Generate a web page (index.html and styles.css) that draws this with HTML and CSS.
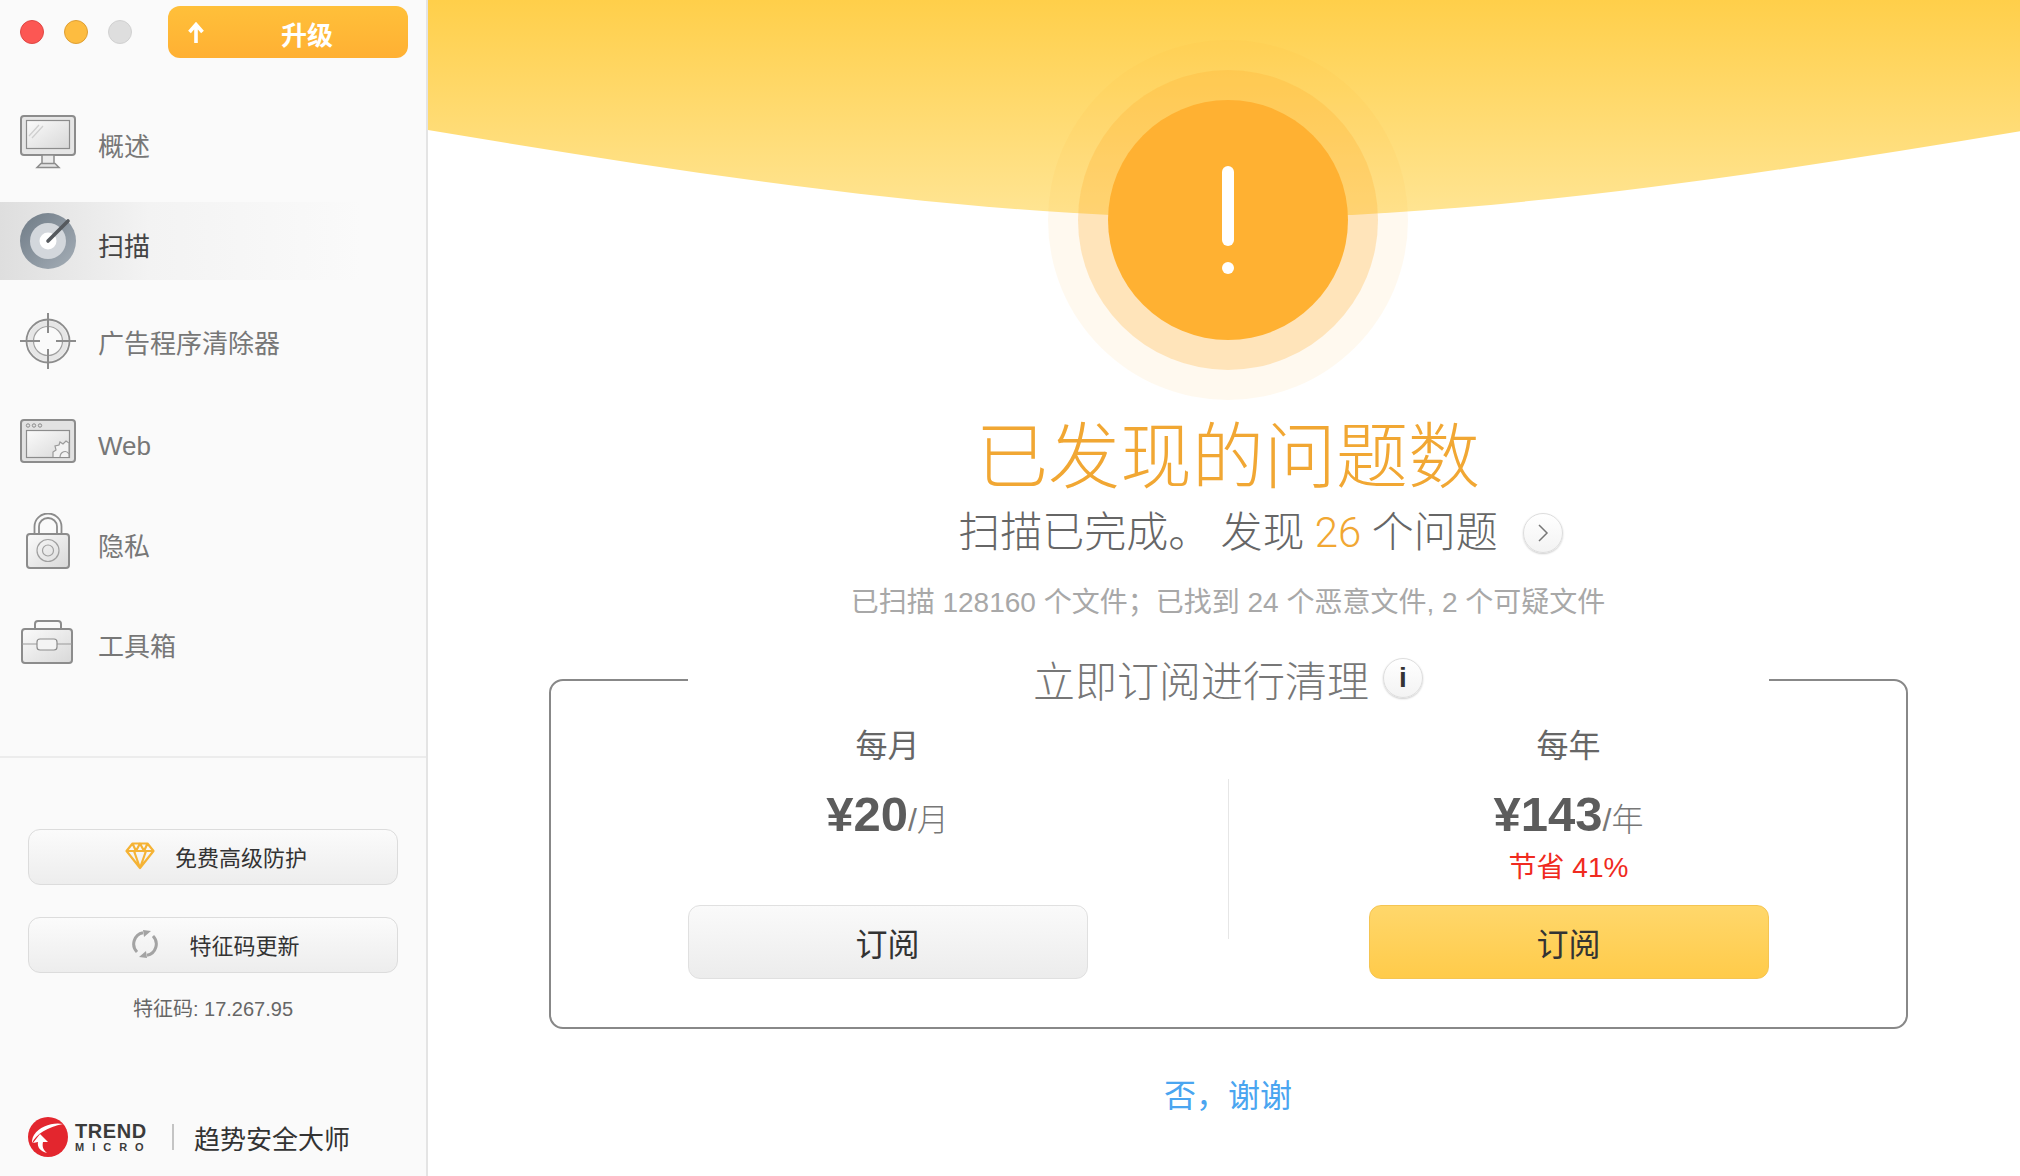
FILE: index.html
```html
<!DOCTYPE html>
<html lang="zh-CN">
<head>
  <meta charset="UTF-8">
  <title>趋势安全大师</title>
  <link rel="stylesheet" href="styles.css">
</head>
<body>
  <div class="app">
    <!-- Sidebar -->
    <aside class="sidebar">
      <div class="titlebar">
        <div class="lights">
          <span class="light light-red"></span>
          <span class="light light-amber"></span>
          <span class="light light-grey"></span>
        </div>
        <button class="upgrade-btn">
          <svg class="upgrade-arrow" width="18" height="22" viewBox="0 0 18 22"><path d="M9 21V4M2.5 10 9 2.5 15.500 10" fill="none" stroke="#fff" stroke-width="3.600"/></svg>
          <span>升级</span>
        </button>
      </div>

      <nav class="nav">
        <a class="nav-item">
          <svg class="nav-icon" width="56" height="56" viewBox="0 0 56 56">
            <defs>
              <linearGradient id="metal" x1="0" y1="0" x2="1" y2="1"><stop offset="0" stop-color="#fbfbfb"/><stop offset="1" stop-color="#d8d8d8"/></linearGradient>
            </defs>
            <rect x="1" y="3" width="54" height="39" rx="3" fill="#e6e6e6" stroke="#8c8c8c" stroke-width="2"/>
            <rect x="6.500" y="7.500" width="43" height="28" fill="url(#metal)" stroke="#8c8c8c" stroke-width="1.200"/>
            <path d="M9 23 19 12M12 25 23 13" stroke="#cfcfcf" stroke-width="1.300"/>
            <path d="M22 42h12v9H22z" fill="#ececec" stroke="#8c8c8c" stroke-width="1.500"/>
            <path d="M17 54.500l4-4h14l4 4z" fill="#e4e4e4" stroke="#8c8c8c" stroke-width="1.500"/>
          </svg>
          <span>概述</span>
        </a>
        <a class="nav-item active">
          <svg class="nav-icon" width="56" height="56" viewBox="0 0 56 56">
            <defs>
              <linearGradient id="dial" x1="0" y1="0" x2="1" y2="1"><stop offset="0" stop-color="#6f7b86"/><stop offset="1" stop-color="#a5aeb7"/></linearGradient>
            </defs>
            <circle cx="28" cy="28" r="28" fill="url(#dial)"/>
            <circle cx="28" cy="28" r="18" fill="#d3d7dc"/>
            <circle cx="28" cy="28" r="8.500" fill="#fff"/>
            <path d="M28 28 48 8" stroke="#55595e" stroke-width="3.600" stroke-linecap="round"/>
          </svg>
          <span>扫描</span>
        </a>
        <a class="nav-item nav-item-tight">
          <svg class="nav-icon" width="56" height="56" viewBox="0 0 56 56">
            <circle cx="28" cy="28" r="17.500" fill="none" stroke="#e6e6e6" stroke-width="5"/>
            <circle cx="28" cy="28" r="21.500" fill="none" stroke="#8c8c8c" stroke-width="1.800"/>
            <circle cx="28" cy="28" r="14.500" fill="none" stroke="#a0a0a0" stroke-width="1.200"/>
            <path d="M28 0v20M28 36v20M0 28h20M36 28h20" stroke="#8c8c8c" stroke-width="2"/>
          </svg>
          <span>广告程序清除器</span>
        </a>
        <a class="nav-item nav-item-latin">
          <svg class="nav-icon" width="56" height="56" viewBox="0 0 56 56">
            <rect x="1" y="7" width="54" height="42" rx="3" fill="#e2e2e2" stroke="#8c8c8c" stroke-width="2"/>
            <circle cx="8" cy="12.500" r="1.700" fill="none" stroke="#8c8c8c"/>
            <circle cx="14" cy="12.500" r="1.700" fill="none" stroke="#8c8c8c"/>
            <circle cx="20" cy="12.500" r="1.700" fill="none" stroke="#8c8c8c"/>
            <rect x="6.500" y="17.500" width="43" height="27" fill="url(#metal)" stroke="#8c8c8c" stroke-width="1.200"/>
            <path d="M33 44v-5l3-2-1-4 4-1 1-3 3 2 3-3 3 2v14" fill="#f2f2f2" stroke="#9a9a9a" stroke-width="1.200"/>
            <path d="M40 44a5 6 0 0 1 9-3" fill="none" stroke="#9a9a9a" stroke-width="1.200"/>
          </svg>
          <span>Web</span>
        </a>
        <a class="nav-item">
          <svg class="nav-icon" width="56" height="56" viewBox="0 0 56 56">
            <path d="M14.500 22V13.500a13.500 13 0 0 1 27 0V22" fill="none" stroke="#8c8c8c" stroke-width="1.800"/>
            <path d="M19 22V13.500a9 8.500 0 0 1 18 0V22" fill="none" stroke="#8c8c8c" stroke-width="1.800"/>
            <rect x="7" y="21" width="42" height="34" rx="3" fill="url(#metal)" stroke="#8c8c8c" stroke-width="2"/>
            <circle cx="28" cy="37.500" r="11" fill="none" stroke="#a0a0a0" stroke-width="1.200"/>
            <circle cx="28" cy="37.500" r="5.500" fill="none" stroke="#a0a0a0" stroke-width="1.200"/>
          </svg>
          <span>隐私</span>
        </a>
        <a class="nav-item">
          <svg class="nav-icon" width="56" height="56" viewBox="0 0 56 56">
            <path d="M15 17v-6a3 3 0 0 1 3-3h20a3 3 0 0 1 3 3v6" fill="none" stroke="#8c8c8c" stroke-width="2"/>
            <rect x="2" y="16" width="50" height="34" rx="3" fill="url(#metal)" stroke="#8c8c8c" stroke-width="2"/>
            <path d="M2 31h50" stroke="#9a9a9a" stroke-width="1.200"/>
            <rect x="17" y="26" width="20" height="11" rx="3" fill="#f4f4f4" stroke="#8c8c8c" stroke-width="1.200"/>
          </svg>
          <span>工具箱</span>
        </a>
      </nav>

      <div class="side-tools">
        <button class="side-btn">
          <svg width="30" height="28" viewBox="0 0 30 28"><path d="M7.500 1.500h15L28.500 9 15 26 1.500 9zM1.500 9h27M9 9l6 17 6-17M7.500 1.500 11 9l4-7.500L19 9l3.500-7.500" fill="none" stroke="#f5b335" stroke-width="2.200" stroke-linejoin="round"/></svg>
          <span>免费高级防护</span>
        </button>
        <button class="side-btn">
          <svg width="26" height="28" viewBox="0 0 26 28"><path d="M5 22A11.500 11.500 0 0 1 11 2.700M21 6a11.500 11.500 0 0 1-6 19.300" fill="none" stroke="#a3a3a3" stroke-width="3"/><path d="M11 0l8 1-7 6zM15 28l-8-1 7-6z" fill="#a3a3a3"/></svg>
          <span class="side-btn-wide">特征码更新</span>
        </button>
        <p class="sig">特征码: 17.267.95</p>
      </div>

      <div class="brand">
        <svg width="40" height="40" viewBox="0 0 40 40">
          <circle cx="20" cy="20" r="20" fill="#e3262e"/>
          <path d="M35 7C25 5 12 9 6 18c-2 3-2 6-2 8C8 17 20 10 35 7z" fill="#fff"/>
          <path d="M12 17l8 8h-5c-1 4 0 8 4 11-7-2-10-6-9-11l-5 1z" fill="#fff"/>
        </svg>
        <div class="brand-mark">
          <span class="brand-trend">TREND</span>
          <span class="brand-micro">MICRO</span>
        </div>
        <span class="brand-sep"></span>
        <span class="brand-name">趋势安全大师</span>
      </div>
    </aside>

    <!-- Scan result -->
    <main class="content">
      <svg class="wave" width="1592" height="218" viewBox="0 0 1592 218" preserveAspectRatio="none">
        <defs>
          <linearGradient id="sky" x1="0" y1="0" x2="0" y2="1"><stop offset="0" stop-color="#ffcf4a"/><stop offset="1" stop-color="#ffe594"/></linearGradient>
        </defs>
        <path d="M0 0H1600V130C1330 175 1050 218 800 218C550 218 270 175 0 130Z" fill="url(#sky)"/>
      </svg>

      <div class="ring-outer">
        <div class="ring-mid">
          <div class="alert">
            <span class="alert-bar"></span>
            <span class="alert-dot"></span>
          </div>
        </div>
      </div>

      <h1 class="title">已发现的问题数</h1>
      <p class="summary">
        <span>扫描已完成。 发现 <em>26</em> 个问题</span>
        <span class="round-btn">
          <svg width="12" height="20" viewBox="0 0 12 20"><path d="M2 2l8 8-8 8" fill="none" stroke="#777" stroke-width="1.500"/></svg>
        </span>
      </p>
      <p class="stats">已扫描 128160 个文件；已找到 24 个恶意文件, 2 个可疑文件</p>

      <section class="panel">
        <h2 class="panel-title">
          <span>立即订阅进行清理</span>
          <span class="round-btn info">i</span>
        </h2>
        <div class="plans">
          <div class="plan">
            <h3>每月</h3>
            <p class="price"><b>¥20</b>/月</p>
            <button class="sub-btn">订阅</button>
          </div>
          <div class="plan-sep"></div>
          <div class="plan">
            <h3>每年</h3>
            <p class="price"><b>¥143</b>/年</p>
            <p class="save">节省 41%</p>
            <button class="sub-btn sub-btn-primary">订阅</button>
          </div>
        </div>
      </section>

      <a class="no-thanks">否，谢谢</a>
    </main>
  </div>
</body>
</html>
```

FILE: styles.css
```css
/* General Styles */
body {
  margin: 0;
  background: #fff;
  font-family: "Liberation Sans", "Noto Sans CJK SC", sans-serif;
  color: #666;
}
h1, h2, h3, p {
  margin: 0;
  font-weight: normal;
}
button {
  font-family: inherit;
  cursor: pointer;
}
.app {
  display: flex;
  height: 1176px;
  overflow: hidden;
}
/* Sidebar */
.sidebar {
  width: 426px;
  flex: none;
  display: flex;
  flex-direction: column;
  background: #fafafa;
  border-right: 2px solid #e4e4e4;
}
.titlebar {
  display: flex;
  align-items: center;
  justify-content: space-between;
  padding: 6px 18px 0 20px;
}
.lights {
  display: flex;
  gap: 20px;
}
.light {
  width: 24px;
  height: 24px;
  border-radius: 50%;
  box-sizing: border-box;
}
.light-red {
  background: #fc5753;
  border: 1px solid #df4744;
}
.light-amber {
  background: #fdbc40;
  border: 1px solid #de9f34;
}
.light-grey {
  background: #dedede;
  border: 1px solid #d1d1d1;
}
.upgrade-btn {
  position: relative;
  width: 240px;
  height: 52px;
  border: none;
  border-radius: 12px;
  background: linear-gradient(#ffc03a, #ffb033);
  color: #fff;
  font-size: 26px;
  font-weight: bold;
  padding: 2px 0 0 38px;
}
.upgrade-arrow {
  position: absolute;
  left: 19px;
  top: 16px;
}
.nav {
  margin-top: 44px;
  display: flex;
  flex-direction: column;
}
.nav-item {
  display: flex;
  align-items: center;
  gap: 22px;
  height: 78px;
  margin-bottom: 22px;
  padding-left: 20px;
  font-size: 26px;
  color: #777;
}
.nav-item span {
  padding-top: 6px;
}
.nav-item-tight span {
  padding-top: 0;
}
.nav-item-latin span {
  padding-top: 10px;
}
.nav-item.active {
  background: linear-gradient(90deg, #dedede, #f3f3f3 35%, #fafafa 85%);
  color: #444;
}
.side-tools {
  margin-top: 54px;
  padding: 71px 28px 0;
  border-top: 2px solid #ececec;
  display: flex;
  flex-direction: column;
  gap: 32px;
}
.side-btn {
  height: 56px;
  border: 1px solid #dcdcdc;
  border-radius: 12px;
  background: linear-gradient(#fbfbfb, #ededed);
  color: #333;
  font-size: 22px;
  display: flex;
  align-items: center;
  justify-content: center;
  gap: 20px;
  padding: 0 0 2px 6px;
}
.side-btn-wide {
  margin-left: 11px;
}
.sig {
  margin-top: -8px;
  text-align: center;
  font-size: 20px;
  line-height: 24px;
  color: #666;
}
.brand {
  margin-top: 96px;
  padding-left: 28px;
  display: flex;
  align-items: center;
}
.brand-mark {
  width: 72px;
  margin-left: 7px;
  display: flex;
  flex-direction: column;
  color: #3b3b3b;
  font-weight: bold;
  white-space: nowrap;
}
.brand-trend {
  font-size: 20px;
  line-height: 20px;
  letter-spacing: 0.600px;
}
.brand-micro {
  font-size: 11px;
  line-height: 12px;
  letter-spacing: 8px;
}
.brand-sep {
  width: 2px;
  height: 26px;
  margin: 0 20px 0 25px;
  background: #c4c4c4;
}
.brand-name {
  font-size: 26px;
  color: #333;
}
/* Main area */
.content {
  position: relative;
  flex: 1;
  display: flex;
  flex-direction: column;
  align-items: center;
  padding: 40px 0 0 8px;
}
.wave {
  position: absolute;
  left: 0;
  top: 0;
}
.ring-outer, .ring-mid {
  position: relative;
  padding: 30px;
  border-radius: 50%;
}
.ring-outer {
  background: rgba(255, 177, 51, 0.08);
}
.ring-mid {
  background: rgba(255, 177, 51, 0.28);
}
.alert {
  width: 240px;
  height: 240px;
  box-sizing: border-box;
  padding-top: 66px;
  border-radius: 50%;
  background: #ffb132;
  display: flex;
  flex-direction: column;
  align-items: center;
}
.alert-bar {
  width: 12px;
  height: 80px;
  border-radius: 6px;
  background: #fff;
}
.alert-dot {
  width: 12px;
  height: 12px;
  margin-top: 16px;
  border-radius: 50%;
  background: #fff;
}
.title {
  margin-top: 17px;
  font-size: 72px;
  line-height: 80px;
  font-weight: 300;
  color: #f1a733;
}
.summary {
  margin-top: 11px;
  padding-left: 65px;
  display: flex;
  align-items: center;
  gap: 25px;
  font-family: Roboto, "Noto Sans CJK SC", sans-serif;
  font-size: 42px;
  line-height: 50px;
  font-weight: 300;
  color: #666;
}
.summary em {
  font-style: normal;
  color: #f1a733;
}
.round-btn {
  width: 40px;
  height: 40px;
  box-sizing: border-box;
  border: 1px solid #ddd;
  border-radius: 50%;
  background: linear-gradient(#fff, #f3f3f3);
  box-shadow: 0 1px 2px rgba(0, 0, 0, 0.2);
  display: flex;
  align-items: center;
  justify-content: center;
}
.stats {
  margin-top: 27px;
  font-size: 28px;
  line-height: 36px;
  color: #a8a8a8;
}
/* Subscribe panel */
.panel {
  margin-top: 58px;
  width: 1359px;
  height: 350px;
  box-sizing: border-box;
  border: 2px solid #888;
  border-radius: 14px;
}
.panel-title {
  width: 1081px;
  height: 50px;
  margin: -28px auto 0;
  background: #fff;
  display: flex;
  align-items: center;
  justify-content: center;
  gap: 14px;
  font-size: 42px;
  font-weight: 300;
  color: #777;
}
.info {
  font-size: 28px;
  font-weight: bold;
  color: #333;
}
.plans {
  margin-top: 23px;
  display: grid;
  grid-template-columns: 400px 1px 400px;
  column-gap: 140px;
  justify-content: center;
}
.plan {
  height: 253px;
  display: flex;
  flex-direction: column;
  align-items: center;
}
.plan h3 {
  font-size: 32px;
  line-height: 40px;
  color: #666;
}
.price {
  margin-top: 18px;
  font-size: 32px;
  line-height: 60px;
  font-weight: 300;
  color: #777;
}
.price b {
  font-size: 49px;
  font-weight: bold;
  color: #5c5c5c;
}
.save {
  font-size: 28px;
  line-height: 36px;
  color: #f02a20;
}
.plan-sep {
  margin-top: 53px;
  height: 160px;
  background: #e6e6e6;
}
.sub-btn {
  margin-top: auto;
  width: 400px;
  height: 74px;
  border: 1px solid #e0e0e0;
  border-radius: 12px;
  background: linear-gradient(#fafafa, #ececec);
  font-size: 32px;
  color: #333;
}
.sub-btn-primary {
  border-color: #f5c552;
  background: linear-gradient(#ffd76b, #ffcb4a);
}
.no-thanks {
  margin-top: 47px;
  font-size: 32px;
  line-height: 40px;
  color: #4aa5f0;
}
```
